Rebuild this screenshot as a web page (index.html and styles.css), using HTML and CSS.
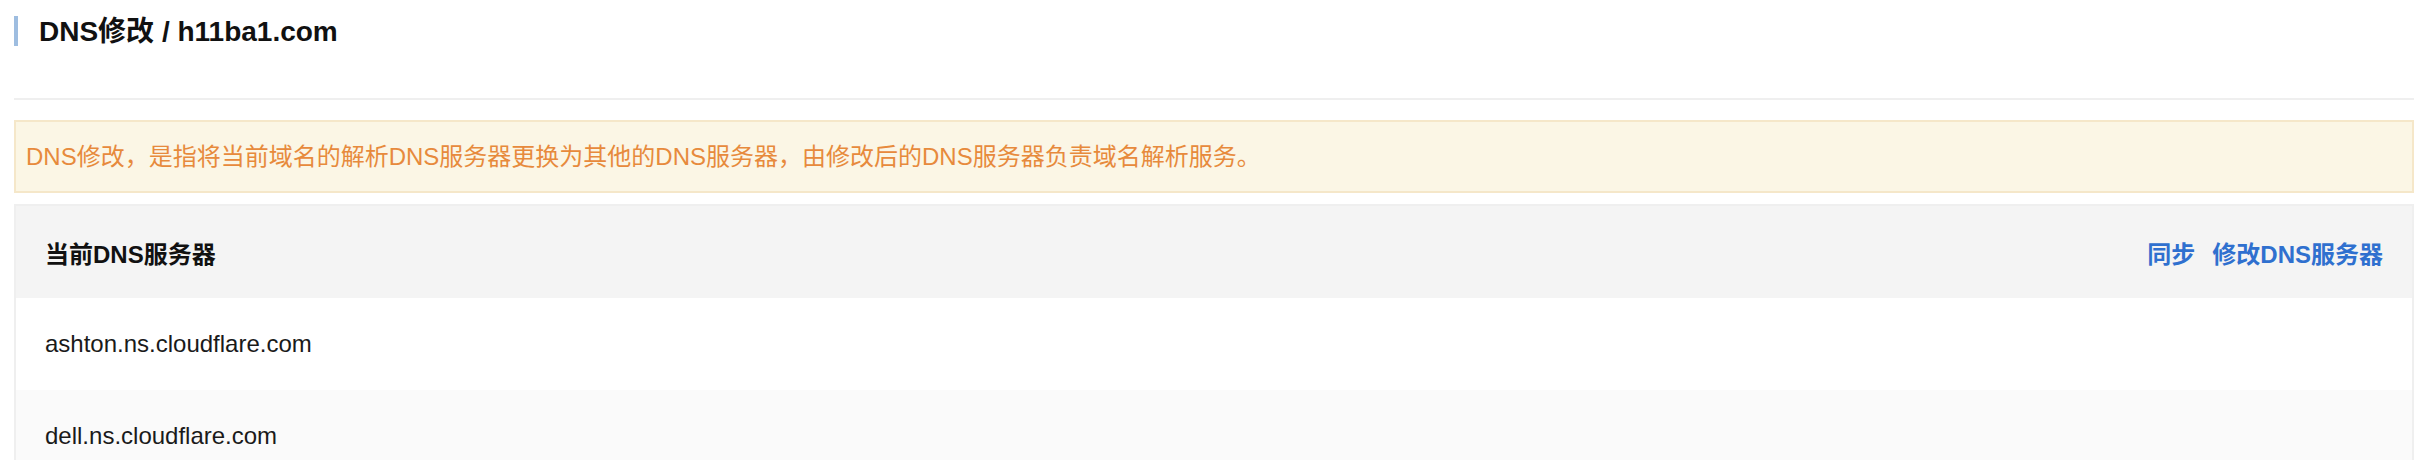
FILE: index.html
```html
<!DOCTYPE html>
<html lang="zh">
<head>
<meta charset="utf-8">
<title>DNS修改</title>
<link rel="stylesheet" href="styles.css">
</head>
<body>
<div class="page">
  <h1 class="title">DNS修改 / h11ba1.com</h1>
  <div class="divider"></div>
  <div class="alert">DNS修改，是指将当前域名的解析DNS服务器更换为其他的DNS服务器，由修改后的DNS服务器负责域名解析服务。</div>
  <div class="table">
    <div class="table-head">
      <span class="head-title">当前DNS服务器</span>
      <div class="actions">
        <a class="link" href="#">同步</a>
        <a class="link" href="#">修改DNS服务器</a>
      </div>
    </div>
    <div class="row">ashton.ns.cloudflare.com</div>
    <div class="row row-alt">dell.ns.cloudflare.com</div>
  </div>
</div>
</body>
</html>
```

FILE: styles.css
```css
html, body {
  margin: 0;
  padding: 0;
  background: #fff;
}
body {
  font-family: "Liberation Sans", "Noto Sans CJK SC", sans-serif;
  color: #1a1a1a;
}
.page {
  padding: 16px 10px 0 14px;
}
.title {
  margin: 0;
  height: 30px;
  line-height: 31px;
  border-left: 4px solid #9ebde0;
  padding-left: 21px;
  font-size: 28px;
  font-weight: bold;
  color: #111;
}
.divider {
  margin-top: 52px;
  height: 2px;
  background: #efefef;
}
.alert {
  margin-top: 20px;
  height: 69px;
  line-height: 69px;
  border: 2px solid #f5e7c9;
  background: #fbf6e5;
  color: #e78a3c;
  font-size: 24px;
  padding-left: 10px;
}
.table {
  margin-top: 11px;
  border: 2px solid #efefef;
  border-bottom: none;
}
.table-head {
  display: flex;
  align-items: center;
  justify-content: space-between;
  height: 92px;
  background: #f4f4f4;
  padding: 0 29px;
}
.head-title {
  font-size: 24px;
  font-weight: bold;
  color: #111;
}
.actions {
  display: flex;
  gap: 17px;
}
.link {
  font-size: 24px;
  font-weight: bold;
  color: #2f70cf;
  text-decoration: none;
}
.row {
  height: 92px;
  line-height: 92px;
  padding: 0 29px;
  font-size: 24px;
  color: #1a1a1a;
  background: #fff;
}
.row-alt {
  background: #fafafa;
}
```
